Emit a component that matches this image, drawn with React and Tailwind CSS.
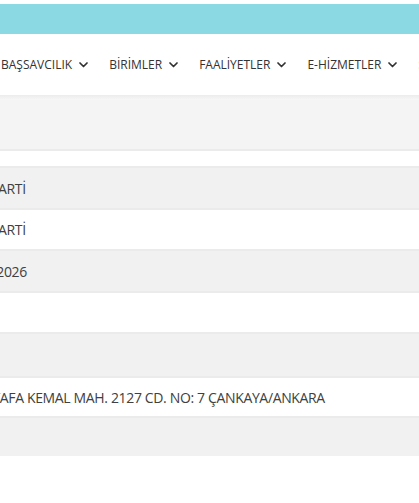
import React from "react";

const navItems = ["BAŞSAVCILIK", "BİRİMLER", "FAALİYETLER", "E-HİZMETLER", "SSS"];

// satırlar: [arka plan, yükseklik, metin, sola kaydırma]
const rows = [
  ["bg-[#f4f4f4]", "h-[49px]", "", ""],
  ["bg-white", "h-[17px]", "", ""],
  ["bg-[#f1f1f1]", "h-[42px]", "PARTİ", "ml-[-10px]"],
  ["bg-white", "h-[41px]", "PARTİ", "ml-[-10px]"],
  ["bg-[#f1f1f1]", "h-[42px]", "01.01.2026", "ml-[-41px]"],
  ["bg-white", "h-[41px]", "", ""],
  ["bg-[#f1f1f1]", "h-[44px]", "", ""],
  ["bg-white", "h-[40px]", "MUSTAFA KEMAL MAH. 2127 CD. NO: 7 ÇANKAYA/ANKARA", "ml-[-37px]"],
  ["bg-[#f1f1f1]", "h-[40px]", "", ""],
];

function Chevron() {
  return (
    <svg width="9" height="6" viewBox="0 0 9 6" className="shrink-0">
      <polyline
        points="1,1 4.5,4.5 8,1"
        fill="none"
        stroke="#333"
        strokeWidth="1.7"
        strokeLinecap="round"
        strokeLinejoin="round"
      />
    </svg>
  );
}

export default function App() {
  return (
    <div
      className="w-[419px] h-[503px] overflow-hidden bg-white text-[#404040]"
      style={{ fontFamily: '"Open Sans", "Noto Sans", sans-serif' }}
    >
      <div className="h-[4px] bg-white" />
      <div className="h-[30px] bg-[#8bd9e3]" />

      {/* menü */}
      <nav className="h-[61px] flex items-center whitespace-nowrap">
        <ul className="flex items-center gap-[21px] pl-[1px] pt-[1px] text-[12px] text-[#333]">
          {navItems.map((item) => (
            <li key={item} className="flex items-center gap-[7px]">
              <span>{item}</span>
              <Chevron />
            </li>
          ))}
        </ul>
      </nav>
      <div className="h-[5px] bg-gradient-to-b from-[#ececec] to-[#f7f7f7]" />

      {/* bilgi tablosu */}
      <div>
        {rows.map(([bg, h, text, shift], i) => (
          <div
            key={i}
            className={`${bg} ${h} flex items-center whitespace-nowrap ${
              i > 0 ? "border-t-2 border-[#ebebeb]" : ""
            }`}
          >
            <span className={`${shift} text-[14px] tracking-[-0.35px]`}>{text}</span>
          </div>
        ))}
      </div>
    </div>
  );
}
